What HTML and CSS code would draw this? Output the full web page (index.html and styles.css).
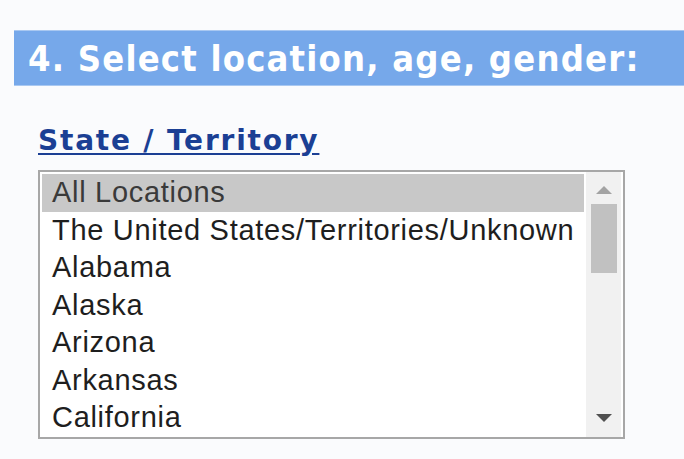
FILE: index.html
```html
<!DOCTYPE html>
<html>
<head>
<meta charset="utf-8">
<link rel="stylesheet" href="styles.css">
</head>
<body>
<div class="heading">4. Select location, age, gender:</div>
<div class="label"><a href="#" class="label-link">State / Territory</a></div>
<div class="listbox">
  <div class="items">
    <div class="item selected">All Locations</div>
    <div class="item">The United States/Territories/Unknown</div>
    <div class="item">Alabama</div>
    <div class="item">Alaska</div>
    <div class="item">Arizona</div>
    <div class="item">Arkansas</div>
    <div class="item">California</div>
  </div>
  <div class="scrollbar">
    <div class="arrow up"></div>
    <div class="thumb"></div>
    <div class="track"></div>
    <div class="arrow down"></div>
  </div>
</div>
</body>
</html>
```
FILE: styles.css
```css
html, body {
  margin: 0;
  padding: 0;
  background: #fafbfd;
}
body {
  width: 684px;
  height: 459px;
  overflow: hidden;
}
.heading {
  margin: 30px 0 0 14px;
  height: 56px;
  box-sizing: border-box;
  background: #76a8ea;
  border-top: 1px solid #a9c8f1;
  border-bottom: 1px solid #a9c8f1;
  color: #ffffff;
  font-family: "DejaVu Sans Condensed", "DejaVu Sans", sans-serif;
  font-weight: bold;
  font-size: 36px;
  letter-spacing: 1.2px;
  padding-left: 14px;
  display: flex;
  align-items: center;
  white-space: nowrap;
}
.label {
  margin: 40px 0 0 38px;
  height: 30px;
  font-family: "DejaVu Sans", "Liberation Sans", sans-serif;
  font-weight: bold;
  font-size: 28px;
  letter-spacing: 1.8px;
  line-height: 30px;
}
.label-link {
  color: #1b3f94;
  text-decoration: underline;
  text-decoration-thickness: 2px;
  text-underline-offset: 3px;
}
.listbox {
  margin: 14px 0 0 38px;
  width: 587px;
  height: 269px;
  box-sizing: border-box;
  border: 2px solid #a7a7a7;
  padding: 2px;
  background: #ffffff;
  display: flex;
}
.items {
  flex: 1;
  font-family: "Liberation Sans", Arial, sans-serif;
  font-size: 29px;
  letter-spacing: 0.7px;
  color: #1e1e1e;
}
.item {
  height: 37.5px;
  line-height: 37.5px;
  padding-left: 10px;
  white-space: nowrap;
}
.item.selected {
  background: #c8c8c8;
  color: #3a3a3a;
}
.scrollbar {
  width: 35px;
  margin: -2px 0 -2px 2px;
  background: #f1f1f1;
  display: flex;
  flex-direction: column;
  align-items: center;
}
.arrow {
  width: 0;
  height: 0;
  border-left: 8px solid transparent;
  border-right: 8px solid transparent;
}
.arrow.up {
  margin-top: 14px;
  border-bottom: 8px solid #a3a3a3;
}
.arrow.down {
  margin-bottom: 15px;
  border-top: 8px solid #505050;
}
.thumb {
  margin-top: 10px;
  width: 26px;
  height: 69px;
  background: #c1c1c1;
}
.track {
  flex: 1;
}
```
